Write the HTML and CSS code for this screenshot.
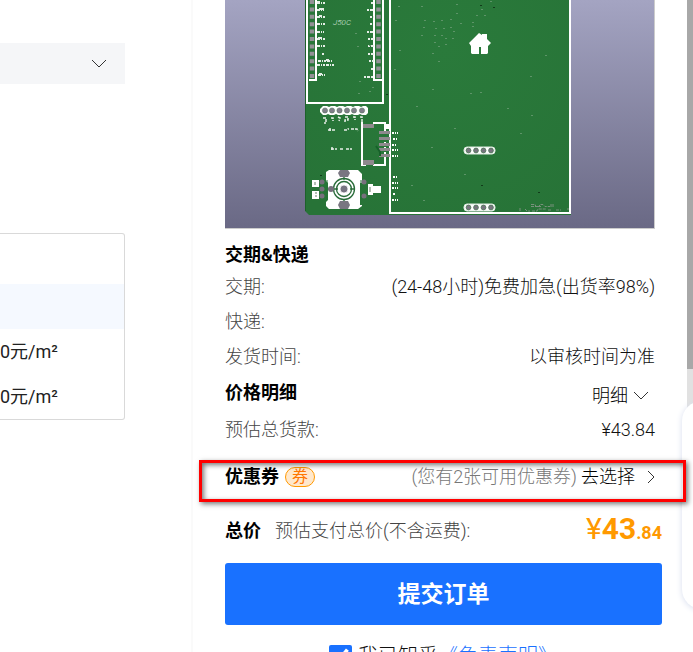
FILE: index.html
```html
<!DOCTYPE html>
<html lang="zh-CN">
<head>
<meta charset="utf-8">
<title>提交订单</title>
<meta name="viewport" content="width=device-width, initial-scale=1">
<link rel="stylesheet" href="styles.css">
</head>
<body>
<div class="page">
  <main class="options">
    <button class="fold" type="button" aria-label="展开">
      <svg class="chevron" width="16" height="10" viewBox="0 0 16 10"><path d="M1 1l7 7 7-7"/></svg>
    </button>
    <table class="prices">
      <tbody>
        <tr class="blank"><td></td></tr>
        <tr class="tinted"><td></td></tr>
        <tr><td>0元/m²</td></tr>
        <tr><td>0元/m²</td></tr>
      </tbody>
    </table>
  </main>

  <aside class="order">
    <div class="preview">
      <svg class="board" viewBox="0 0 429 228" role="img" aria-label="PCB">
        <defs>
          <linearGradient id="sky" x1="0" y1="0" x2="0" y2="1"><stop offset="0" stop-color="#a4a4c2"/><stop offset="1" stop-color="#6a6985"/></linearGradient>
          <radialGradient id="mask" cx="220" cy="50" r="200" gradientUnits="userSpaceOnUse"><stop offset="0" stop-color="#2a7a3b"/><stop offset="1" stop-color="#277337"/></radialGradient>
        </defs>
        <rect width="430" height="228" fill="url(#sky)"/>
        <path d="M80 0H346V215H84L80 211Z" fill="url(#mask)"/>
        <path d="M80.500 0V211" stroke="#1d612b" fill="none"/>
        <!-- module outline and pin columns -->
        <g fill="none" stroke="#fff" stroke-width="2">
          <path d="M82 0V103H158V0M84 80H91V0M157 80H149V0M165 0V213H345V0"/>
        </g>
        <g stroke="#939096" stroke-width="4.500" stroke-dasharray="4 3.400" fill="none">
          <path d="M87 0V79M153.500 0V79"/>
        </g>
        <g stroke="#e5eee7" fill="none" stroke-width="2">
          <path d="M92 3h8M92 10h7M92 17h9M92 24h9M92 32h7M92 39h9M92 46h9M97 54h2M93 61h15M92 65h18M93 75h7" stroke-dasharray="3 1 1 1 2 1"/>
          <path d="M146 3h2M142 10h6M145 17h4M145 24h3M142 32h6M143 39h6M143 46h6M143 54h6M144 61h5M146 69h3M139 77h10" stroke-dasharray="2 1 3 1"/>
          <path d="M92 2h3M94 9h5M94 16h3M93 38h4M101 60h3M94 74h3" />
        </g>
        <text class="silk" x="108" y="25">J50C</text>
        <!-- six-way header -->
        <path d="M98 106h4l2 1 2-1h4l2 1 2-1h4l2 1 2-1h4l2 1 2-1h4l2 1 2-1h3l2 2v5l-2 2h-4l-2-1-2 1h-4l-2-1-2 1h-4l-2-1-2 1h-4l-2-1-2 1h-4l-2-1-2 1h-3l-3-3v-3z" fill="#fff"/>
        <g fill="#817f8a" stroke="#4f7358" stroke-width=".5"><circle cx="100" cy="110.500" r="2.600"/><circle cx="107" cy="110.500" r="2.600"/><circle cx="114.500" cy="110.500" r="2.600"/><circle cx="122" cy="110.500" r="2.600"/><circle cx="129" cy="110.500" r="2.600"/><circle cx="137" cy="110.500" r="2.600"/></g>
        <path d="M98 118h3v5h-2M106 118h2v3M113 117l2 1-1 3M120 117h3v3h-3v3M128 117h2v3M135 117h2v5M103 130h7M105 128v4M119 130h3l1-1h1M126 129h6l1 2M106 149h6M107 147v4M121 149h6M115 149h4" fill="none" stroke="#e6eee7" stroke-width="1.500" stroke-dasharray="3 1"/>
        <!-- side connector -->
        <path d="M137 122v43h4M148 123h12v8M160 156v9h-12" fill="none" stroke="#fff" stroke-width="2"/>
        <path d="M160 132v24" stroke="#fff" stroke-width="2" stroke-dasharray="2 3"/>
        <rect x="161" y="124" width="5" height="5" fill="#fff"/>
        <g fill="#8e898d"><path d="M138 124h11v4h-11zM138 160h11v5h-11zM154 131h11v3h-11zM154 137h11v3h-11zM154 143h11v3h-11zM154 148h11v3h-11zM154 154h11v3h-11z"/></g>
        <path d="M151 146l4 6v4" stroke="#17612a" stroke-width="2" fill="none"/>
        <path d="M167 133h6M168 139h4M167 145h5M167 150h6M167 156h6M168 177h5M167 183h6M167 188h6M168 194h3M167 200h6" stroke="#fff" stroke-width="2" stroke-dasharray="2 1 1 1"/>
        <!-- rotary part -->
        <path d="M104 170h29l4 4v9h-2v22h2v1l-4 3h-29l-3-3v-4l2-2v-17l-2-2v-9z" fill="#fff"/>
        <path d="M102 180v8M102 192v8M136 180v10M136 194v6" stroke="#277337" fill="none"/>
        <g fill="none" stroke="#296c39" stroke-width="1.300"><circle cx="119" cy="189" r="10.500"/><circle cx="119" cy="189" r="7.500"/><path d="M103 189h10M119 177v3M119 199v3M125 189h5"/></g>
        <path d="M115 170h8l2 3-2 4h-8l-2-4zM115 201h8l2 4-2 4h-8l-2-4z" fill="#797681"/>
        <circle cx="119" cy="189" r="4" fill="#777481" stroke="#fff" stroke-width=".8"/>
        <g fill="#77707d"><circle cx="97" cy="182" r="2.500"/><circle cx="97" cy="189" r="2.500"/><circle cx="97" cy="196" r="2.500"/><circle cx="106" cy="189" r="3"/><circle cx="139" cy="182" r="2.500"/><circle cx="139" cy="196" r="2.500"/></g>
        <path d="M87 180h7v7h-7zM87 191h7v8h-7zM143 184h5v2h8v7h-8v2h-5z" fill="#fff"/>
        <path d="M90 182v3M90 193h2M90 196h2M145 187v5" stroke="#66806b"/>
        <!-- home mark -->
        <path d="M244 43l10-10 3 2v-1h5v5l4 4-3 3v7l-1 1h-6v-7h-2v7h-7l-1-1v-7z" fill="#fff"/>
        <!-- four-way headers -->
        <g id="header4"><rect x="239" y="147" width="31" height="7" rx="3" fill="#fff" stroke="#dce9df" stroke-width="1"/><g fill="#77757f" stroke="#477452" stroke-width=".8"><circle cx="243.500" cy="150.500" r="2.400"/><circle cx="251" cy="150.500" r="2.400"/><circle cx="258.500" cy="150.500" r="2.400"/><circle cx="266" cy="150.500" r="2.400"/></g></g>
        <use href="#header4" y="57"/>
        <path d="M306 204.500h4l1 2h3l1-2h3l2 2h5M306 206.500h10M326 204v3M328 204v3M295 208v4M300 209l2 2h3M307 211h5l1-2h8M323 210h4M331 210h5M342 209h2" fill="none" stroke="#79917d" stroke-dasharray="3 1"/>
        <g fill="#5d9468"><path d="M173 6h2v1h-2zM196 6h2v1h-2zM231 4h2v1h-2zM231 13h2v1h-2zM170 20h2v1h-2zM199 20h2v1h-2zM208 21h2v1h-2zM216 20h2v1h-2zM225 19h2v1h-2zM235 23h2v1h-2zM198 27h2v1h-2zM210 28h2v1h-2zM218 28h2v1h-2zM225 27h2v1h-2zM228 31h2v1h-2zM196 35h2v1h-2zM209 35h2v1h-2zM216 35h2v1h-2zM220 38h2v1h-2zM227 38h2v1h-2zM209 42h2v1h-2zM220 44h2v1h-2zM213 46h2v1h-2zM207 53h2v1h-2zM213 61h2v1h-2zM174 50h2v1h-2zM169 69h2v1h-2zM207 89h2v1h-2zM245 93h2v1h-2zM255 92h2v1h-2zM191 106h2v1h-2zM229 128h2v1h-2zM282 108h2v1h-2zM306 115h2v1h-2zM295 133h2v1h-2zM305 76h2v1h-2zM320 55h2v1h-2zM206 147h2v1h-2zM239 174h2v1h-2zM186 185h2v1h-2zM198 200h2v1h-2zM247 22h2v1h-2zM247 26h2v1h-2zM251 15h2v1h-2zM259 15h2v1h-2zM256 9h2v1h-2zM265 1h2v1h-2zM130 33h2v1h-2zM132 46h2v1h-2zM144 45h2v1h-2zM134 81h2v1h-2zM133 93h2v1h-2zM147 87h2v1h-2zM144 91h2v1h-2z"/></g>
        <path d="M255 5h2v1h-2zM268 7h2v1h-2zM161 94h2v1h-2zM256 185h2v1h-2zM313 192h2v1h-2zM95 175h2v1h-2z" fill="#123a1a"/>
      </svg>
    </div>

    <section>
      <h2 class="title">交期&amp;快递</h2>
      <dl class="facts">
        <div class="row"><dt>交期:</dt><dd>(24-48小时)免费加急(出货率98%)</dd></div>
        <div class="row"><dt>快递:</dt><dd></dd></div>
        <div class="row"><dt>发货时间:</dt><dd>以审核时间为准</dd></div>
      </dl>
    </section>

    <section>
      <div class="title-row">
        <h2 class="title">价格明细</h2>
        <button class="more" type="button">明细
          <svg class="chevron" width="16" height="10" viewBox="0 0 16 10"><path d="M1 1l7 7 7-7"/></svg>
        </button>
      </div>
      <dl class="facts">
        <div class="row"><dt>预估总货款:</dt><dd>¥43.84</dd></div>
      </dl>
    </section>

    <section class="coupon">
      <h2 class="title">优惠券</h2>
      <span class="tag">券</span>
      <span class="hint">(您有2张可用优惠券)</span>
      <button class="choose" type="button">去选择
        <svg class="chevron" width="8" height="14" viewBox="0 0 8 14"><path d="M1 1l6 6-6 6"/></svg>
      </button>
      <div class="marker"></div>
    </section>

    <section class="total">
      <h2 class="title">总价</h2>
      <span class="note">预估支付总价(不含运费):</span>
      <strong class="sum"><span class="yen">¥</span>43<small>.84</small></strong>
    </section>

    <button class="submit" type="button">提交订单</button>

    <div class="agree">
      <input type="checkbox" id="agree" checked>
      <label for="agree">我已知乎</label>
      <a href="#">《免责声明》</a>
    </div>
  </aside>
</div>
<div class="scrollbar"></div>
<div class="dock"></div>
</body>
</html>
```
FILE: styles.css
```css
* {
  box-sizing: border-box;
}

body {
  margin: 0;
  height: 100vh;
  overflow: hidden;
  background: #fff;
  color: #111;
  font: 300 18px/24px Roboto, "Noto Sans CJK SC", sans-serif;
}

button {
  padding: 0;
  border: 0;
  background: none;
  color: inherit;
  font: inherit;
}

.page {
  display: grid;
  grid-template-columns: minmax(0, 1fr) 500px;
  min-height: 100vh;
}

.chevron {
  fill: none;
  stroke: #333;
  stroke-width: 1;
}

.options {
  padding: 43px 66px 0 0;
  border-right: 2px solid #fafafa;
}

.fold {
  display: flex;
  align-items: center;
  justify-content: flex-end;
  width: 100%;
  height: 41px;
  padding-right: 18px;
  background: #f5f6f8;
}

.prices {
  width: 100%;
  margin-top: 149px;
  border: 1px solid #d9d9d9;
  border-left: 0;
  border-radius: 0 3px 3px 0;
  border-spacing: 0;
  color: #222;
  font-weight: 400;
}

.prices td {
  height: 45px;
  padding: 0;
}

.prices .blank td {
  height: 50px;
}

.prices .tinted td {
  background: #f5f9ff;
}

.order {
  padding: 0 38px 0 32px;
}

.preview {
  border: solid #ccc;
  border-width: 0 1px 1px 0;
}

.board {
  display: block;
  width: 100%;
}

.silk {
  fill: #dce9df;
  font-size: 8px;
  font-style: italic;
}

.title {
  margin: 0;
  color: #000;
  font-size: 18px;
  font-weight: 700;
}

.preview + section {
  padding-top: 14px;
}

.preview + section .title {
  padding-bottom: 2px;
}

.facts {
  margin: 0;
}

.row {
  display: flex;
  align-items: center;
  justify-content: space-between;
  height: 35px;
}

.row dt {
  color: #444;
}

.row dd {
  margin: 0;
}

.title-row {
  display: flex;
  align-items: center;
  justify-content: space-between;
  height: 38px;
}

.more,
.choose {
  display: flex;
  align-items: center;
  gap: 5px;
  color: #000;
}

.more {
  padding: 6px 6px 0 0;
}

.coupon {
  position: relative;
  z-index: 1;
  display: flex;
  align-items: center;
  height: 32px;
  margin-top: 14px;
}

.tag {
  height: 20px;
  margin-left: 6px;
  padding: 0 6px;
  border: 1px solid #f90;
  border-radius: 10px;
  background: #ffe8cc;
  color: #f70;
  font-size: 16px;
  font-weight: 400;
  line-height: 18px;
}

.hint {
  margin-left: auto;
  color: #777;
}

.choose {
  gap: 12px;
  padding-left: 4px;
}

.marker {
  position: absolute;
  inset: -1px -31px -9px -26px;
  border: 3px solid #f00;
  box-shadow: 2px 2px 5px #0008, inset 2px 2px 5px #0008;
  pointer-events: none;
}

.total {
  display: flex;
  align-items: center;
  height: 46px;
  margin: 15px -7px 0 0;
}

.note {
  margin-left: 14px;
  color: #444;
}

.sum {
  margin-left: auto;
  color: #f90;
  font-size: 30px;
  font-weight: 700;
}

.yen {
  font-weight: 400;
}

.sum small {
  font-size: 18px;
}

.submit {
  display: block;
  width: calc(100% + 7px);
  height: 62px;
  margin-top: 9px;
  padding-top: 2px;
  border-radius: 3px;
  background: #1971ff;
  color: #fff;
  font-size: 23px;
  font-weight: 700;
}

.agree {
  display: flex;
  align-items: center;
  justify-content: center;
  margin: 17px -7px 0 0;
  font-size: 20px;
  line-height: 28px;
}

.agree input {
  width: 23px;
  height: 23px;
  margin: 0 6px 0 0;
  accent-color: #1971ff;
}

.agree a {
  color: #1971ff;
  text-decoration: none;
}

.scrollbar {
  position: fixed;
  inset: 0 0 auto auto;
  width: 6px;
  height: 500px;
  background: linear-gradient(#a8a8a8 369px, #e1e1e1 369px);
}

.dock {
  position: fixed;
  top: 401px;
  right: -40px;
  width: 51px;
  height: 208px;
  border-radius: 20px;
  background: #fff;
  box-shadow: 0 1px 6px #d8deee;
}
```
